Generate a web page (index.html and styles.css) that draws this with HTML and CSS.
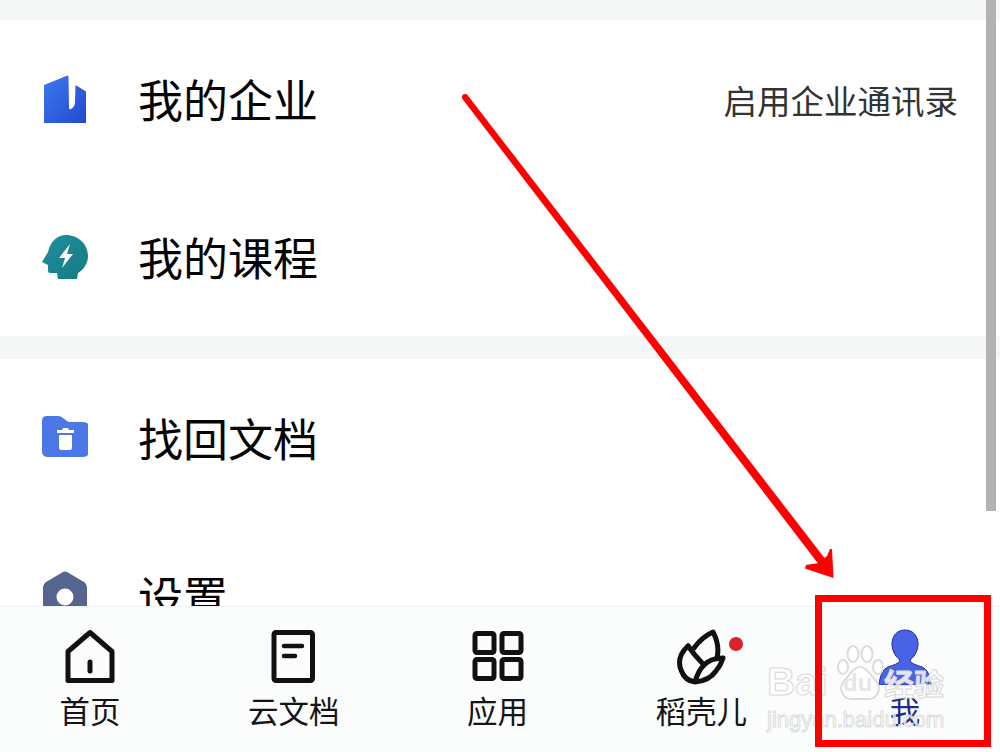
FILE: index.html
```html
<!DOCTYPE html>
<html lang="zh-CN">
  <head>
    <meta charset="UTF-8" />
    <title>我的</title>
    <link rel="stylesheet" href="styles.css">
  </head>
  <body>
    <div class="screen">
      <div class="gap gap-top"></div>

      <section class="group">
        <div class="row">
          <svg class="row-icon" viewBox="0 0 46 50">
            <defs>
              <linearGradient id="blue" x1="0" y1="0" x2="1" y2="1">
                <stop offset="0" stop-color="#3f79ee" />
                <stop offset="1" stop-color="#2149cf" />
              </linearGradient>
            </defs>
            <path fill="url(#blue)" d="M2 11 L25.500 1.500 Q26.500 1.500 26.500 3 L27 34 Q27 36 29 35 Q33 33 33 28 L33.500 11 L44 17.500 L44 49 L2 49 Z" />
          </svg>
          <span class="row-title">我的企业</span>
          <span class="row-extra">启用企业通讯录</span>
        </div>
        <div class="row">
          <svg class="row-icon" viewBox="0 0 46 50">
            <defs>
              <linearGradient id="teal" x1="0" y1="0" x2="1" y2="1">
                <stop offset="0" stop-color="#1f8fa0" />
                <stop offset="1" stop-color="#167a80" />
              </linearGradient>
            </defs>
            <path fill="url(#teal)" d="M24 3 C36 3 46 12 46 24 C46 32 41 38 36 41 L35 47 L16 47 L15 41 L8 41 Q6 41 6 38 L6 33 L0 30 L6 20 C8 10 15 3 24 3 Z" />
            <path fill="#fff" d="M28 12 L17 26 L23 26 L20 36 L31 22 L25 22 Z" />
          </svg>
          <span class="row-title">我的课程</span>
        </div>
      </section>

      <div class="gap gap-mid"></div>

      <section class="group">
        <div class="row">
          <svg class="row-icon" viewBox="0 0 46 50">
            <path fill="#4b78e6" d="M0 8 Q0 3 5 3 L16 3 Q19 3 21 5 L25 8 Q26 9 28 9 L41 9 Q47 9 47 14 L47 38 Q47 44 41 44 L6 44 Q0 44 0 38 Z" />
            <path fill="#fff" d="M15 17 L20 17 L21 15 L26 15 L27 17 L32 17 L32 20 L15 20 Z M17 22 L30 22 L30 35 Q30 37 28 37 L19 37 Q17 37 17 35 Z" />
          </svg>
          <span class="row-title">找回文档</span>
        </div>
        <div class="row">
          <svg class="row-icon" viewBox="0 0 46 50">
            <path fill="#56658f" d="M21 1 Q23 0 25 1 L42 11 Q45 13 45 16 L45 50 L1 50 L1 16 Q1 13 4 11 Z" />
            <circle fill="#fff" cx="23" cy="26" r="8.500" />
          </svg>
          <span class="row-title">设置</span>
        </div>
      </section>

      <nav class="tabbar">
        <div class="tab">
          <svg class="tab-icon" viewBox="0 0 60 56">
            <path class="line" d="M30 3.500 L52 22.500 L52 51.500 L8 51.500 L8 22.500 Z" />
            <path class="line" d="M30 33 L30 42" />
          </svg>
          <span class="tab-label">首页</span>
        </div>
        <div class="tab">
          <svg class="tab-icon" viewBox="0 0 60 56">
            <rect class="line" x="10" y="3.500" width="38.500" height="48" rx="2" />
            <path class="line thin" d="M20 17 L38 17 M20 27 L31 27" />
          </svg>
          <span class="tab-label">云文档</span>
        </div>
        <div class="tab">
          <svg class="tab-icon" viewBox="0 0 60 56">
            <rect class="line" x="7" y="4.500" width="19" height="19" rx="2" />
            <rect class="line" x="34" y="4.500" width="19" height="19" rx="2" />
            <rect class="line" x="7" y="30.500" width="19" height="19" rx="2" />
            <rect class="line" x="34" y="30.500" width="19" height="19" rx="2" />
          </svg>
          <span class="tab-label">应用</span>
        </div>
        <div class="tab">
          <svg class="tab-icon" viewBox="0 0 60 56">
            <path class="line" d="M17 17 Q5 28 10 41 Q14 52 24 53 Q38 52 45 42 Q50 36 52 29 Q40 29 33 36 Q27 42 24 53" />
            <path class="line" d="M17 17 Q24 27 33 36" />
            <path class="line" d="M23 19 Q31 8 42 3 Q49 16 46 29" />
          </svg>
          <i class="dot"></i>
          <span class="tab-label">稻壳儿</span>
        </div>
        <div class="tab tab-active">
          <svg class="tab-icon" viewBox="0 0 60 56">
            <path fill="#4a63e6" stroke="#1d2c9c" stroke-width="1" d="M30 1 C38 1 43 7 43 15 C43 23 38 29 35 31 C36 35 42 36 47 38 C52 40 55 46 56 56 L4 56 C5 46 8 40 13 38 C18 36 24 35 25 31 C22 29 17 23 17 15 C17 7 22 1 30 1 Z" />
          </svg>
          <span class="tab-label">我</span>
        </div>
      </nav>

      <div class="scrollbar"></div>

      <div class="watermark">
        <div class="mark-top">
          <span class="mark-bai">Bai</span>
          <span class="mark-paw">
            <svg viewBox="0 0 46 56">
              <g class="paw">
                <ellipse cx="6" cy="22" rx="5" ry="7" />
                <ellipse cx="16" cy="9" rx="5.500" ry="8" />
                <ellipse cx="30" cy="9" rx="5.500" ry="8" />
                <ellipse cx="41" cy="22" rx="5" ry="7" />
                <path d="M23 22 C30 22 33 30 39 36 C45 43 41 54 31 54 L15 54 C5 54 1 43 7 36 C13 30 16 22 23 22 Z" />
              </g>
            </svg>
            <span class="mark-du">du</span>
          </span>
          <span class="mark-jy">经验</span>
        </div>
        <div class="mark-url">jingyan.baidu.com</div>
      </div>

      <!-- red annotation on top of the screenshot -->
      <svg class="arrow" viewBox="0 0 1000 752">
        <circle cx="465" cy="97" r="3" fill="#ff0000" />
        <polygon fill="#ff0000" points="462.500,99 467.500,95 826,560 820,566" />
        <polygon fill="#ff0000" points="833.500,578 805,568.500 806,565 819,563 827,556 830,549 832,549" />
      </svg>
      <div class="redbox"></div>
    </div>
  </body>
</html>
```

FILE: styles.css
```css
* {
  box-sizing: border-box;
}

html,
body {
  margin: 0;
  padding: 0;
  background: #fff;
}

.screen {
  position: relative;
  width: 1000px;
  height: 752px;
  overflow: hidden;
  font-family: "Noto Sans CJK SC", "Noto Sans", sans-serif;
  color: #111;
  background: #fff;
}

.gap {
  background: #f5f6f6;
}

.gap-top {
  height: 20px;
}

.gap-mid {
  height: 23px;
}

.group {
  background: #fff;
}

.row {
  display: flex;
  align-items: center;
  height: 158px;
  padding: 0 42px;
}

.row-icon {
  flex: none;
  width: 46px;
  height: 50px;
  margin-right: 50px;
}

.row-title {
  font-size: 45px;
  line-height: 60px;
  color: #050505;
}

.row-extra {
  margin-left: auto;
  font-size: 33.500px;
  color: #333;
}

.tabbar {
  position: absolute;
  left: 0;
  right: 0;
  bottom: 0;
  height: 146px;
  display: flex;
  justify-content: space-between;
  padding: 22px 45px 0 40px;
  background: #fbfcfc;
  border-top: 1px solid #f0f1f1;
}

.tab {
  position: relative;
  display: flex;
  flex-direction: column;
  align-items: center;
  width: 100px;
}

.tab-icon {
  width: 60px;
  height: 56px;
}

.line {
  fill: none;
  stroke: #111;
  stroke-width: 5;
  stroke-linejoin: round;
  stroke-linecap: round;
}

.line.thin {
  stroke-width: 4.500;
}

.tab-label {
  margin-top: 5px;
  font-size: 30.500px;
  line-height: 40px;
  white-space: nowrap;
  color: #151515;
}

.tab-active .tab-label {
  color: #1f2a8f;
}

.dot {
  position: absolute;
  top: 8px;
  left: 78px;
  width: 14px;
  height: 14px;
  border-radius: 50%;
  background: #d8232a;
}

.scrollbar {
  position: absolute;
  top: 0;
  left: 986px;
  width: 10px;
  height: 511px;
  background: #b2b2b2;
}

.watermark {
  position: absolute;
  left: 767px;
  top: 645px;
  width: 180px;
}

.mark-top {
  display: flex;
  align-items: flex-end;
  height: 56px;
}

.mark-bai {
  width: 70px;
  font: bold 39px/38px "Liberation Sans", sans-serif;
  color: rgba(255, 255, 255, 0.9);
  -webkit-text-stroke: 1px #d9d9d9;
}

.mark-paw {
  position: relative;
  width: 46px;
  height: 56px;
}

.mark-paw svg {
  display: block;
  width: 46px;
  height: 56px;
}

.paw {
  fill: rgba(255, 255, 255, 0.9);
  stroke: #dcdcdc;
  stroke-width: 2;
}

.mark-du {
  position: absolute;
  left: 6px;
  top: 24px;
  font: bold 24px/28px "Liberation Sans", sans-serif;
  color: #e6e6e6;
}

.mark-jy {
  margin-left: 1px;
  font-size: 30px;
  line-height: 38px;
  font-weight: 700;
  color: rgba(255, 255, 255, 0.85);
  -webkit-text-stroke: 1px #d9d9d9;
}

.mark-url {
  margin-top: 7px;
  font: 22px/24px "Liberation Sans", sans-serif;
  white-space: nowrap;
  color: rgba(255, 255, 255, 0.7);
  -webkit-text-stroke: 1px #dcdcdc;
}

.arrow {
  position: absolute;
  left: 0;
  top: 0;
  width: 1000px;
  height: 752px;
}

.redbox {
  position: absolute;
  left: 815px;
  top: 595px;
  width: 176px;
  height: 152px;
  border: 7px solid #ff0000;
}
```
